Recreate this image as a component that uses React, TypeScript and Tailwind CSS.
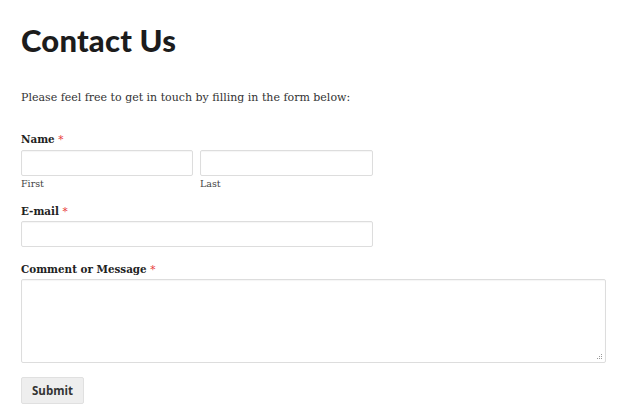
export default function App() {
  const serif = "font-['DejaVu_Serif','Liberation_Serif',serif]"
  const label = 'block text-[11.5px] font-bold leading-[18px] text-[#222] [font-stretch:condensed]'
  const input = 'block h-[26px] border border-[#ddd] bg-white rounded-[2px] shadow-[inset_0_1px_1px_rgba(0,0,0,0.04)]'
  const star = <span className="text-[#e83b3b] font-normal">*</span>

  return (
    <main className="min-h-screen bg-white px-[21px] pt-[21px] text-[#222]">
      <h1 className="font-['Lato','Inter',sans-serif] text-[31px] font-black leading-[38px] tracking-[0.2px] text-[#1c1c1c]">
        Contact Us
      </h1>

      <p className={`${serif} mt-[30px] text-[11px] leading-[18px] text-[#333]`}>
        Please feel free to get in touch by filling in the form below:
      </p>

      <form className={`${serif} mt-[23px]`}>
        <label className={label}>Name {star}</label>
        <div className="mt-[2px] flex gap-[7px]">
          <div>
            <div className={`${input} w-[172px]`} />
            <div className="mt-[1px] text-[9.5px] leading-[14px] text-[#444]">First</div>
          </div>
          <div>
            <div className={`${input} w-[173px]`} />
            <div className="mt-[1px] text-[9.5px] leading-[14px] text-[#444]">Last</div>
          </div>
        </div>

        <label className={`${label} mt-[11px]`}>E-mail {star}</label>
        <div className={`${input} mt-[1px] w-[352px]`} />

        <label className={`${label} mt-[13px]`}>Comment or Message {star}</label>
        <div className={`${input} relative mt-[1px] h-[84px] w-[585px]`}>
          <svg className="absolute bottom-[2px] right-[2px]" width="7" height="7" viewBox="0 0 7 7">
            <rect x="5" y="1" width="1" height="1" fill="#999" />
            <rect x="3" y="3" width="1" height="1" fill="#999" />
            <rect x="5" y="3" width="1" height="1" fill="#999" />
            <rect x="1" y="5" width="1" height="1" fill="#999" />
            <rect x="3" y="5" width="1" height="1" fill="#999" />
            <rect x="5" y="5" width="1" height="1" fill="#999" />
          </svg>
        </div>

        <button
          type="button"
          className="mt-[14px] h-[27px] w-[63px] rounded-[2px] border border-[#e0e0e0] bg-[#eee] font-['Open_Sans','Lato',sans-serif] text-[11.5px] font-bold text-[#333]"
        >
          Submit
        </button>
      </form>
    </main>
  )
}
